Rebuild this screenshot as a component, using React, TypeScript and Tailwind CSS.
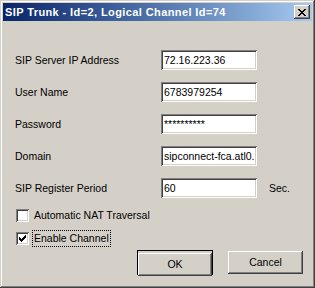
const raised =
  'shadow-[inset_-1px_-1px_#404040,inset_1px_1px_#ffffff,inset_-2px_-2px_#808080,inset_2px_2px_#d4d0c8]';
const sunken =
  'shadow-[inset_1px_1px_#808080,inset_-1px_-1px_#ffffff,inset_2px_2px_#404040,inset_-2px_-2px_#d4d0c8]';

function Field({ label, value, extra }: { label: string; value: string; extra?: string }) {
  return (
    <div className="flex items-center h-[20px]">
      <span className="w-[146px] text-[10.5px] leading-none">{label}</span>
      <div className={`w-[96px] h-[20px] bg-white ${sunken} flex items-center px-[3px] overflow-hidden`}>
        <span className="text-[10.5px] leading-none whitespace-nowrap">{value}</span>
      </div>
      {extra && <span className="ml-[12px] text-[10.5px] leading-none">{extra}</span>}
    </div>
  );
}

function Checkbox({ label, checked, focused }: { label: string; checked?: boolean; focused?: boolean }) {
  return (
    <div className="flex items-center h-[13px] ml-[1px]">
      <div className={`w-[13px] h-[13px] bg-white ${sunken} relative shrink-0`}>
        {checked && (
          <svg width="7" height="7" viewBox="0 0 7 7" className="absolute left-[3px] top-[3px]" shapeRendering="crispEdges">
            <path
              d="M6 0h1v3h-1zM5 1h1v3h-1zM4 2h1v3h-1zM3 3h1v3h-1zM2 4h1v3h-1zM1 3h1v3h-1zM0 2h1v3h-1z"
              fill="#000"
            />
          </svg>
        )}
      </div>
      <span
        className={`ml-[3px] px-[1px] py-[2px] text-[10.5px] leading-none border border-dotted ${
          focused ? 'border-black' : 'border-transparent'
        }`}
      >
        {label}
      </span>
    </div>
  );
}

export default function App() {
  return (
    <div
      className={`w-[315px] h-[288px] bg-[#d4d0c8] p-[3px] flex flex-col text-black font-['Liberation_Sans',Arial,sans-serif] shadow-[inset_-1px_-1px_#404040,inset_1px_1px_#d4d0c8,inset_-2px_-2px_#808080,inset_2px_2px_#ffffff]`}
    >
      {/* Title bar */}
      <div className="h-[18px] flex items-center justify-between pl-[2px] pr-[2px] bg-gradient-to-r from-[#0a246a] to-[#a6caf0]">
        <span className="text-white font-bold text-[11px] tracking-[0.4px] leading-none">
          SIP Trunk - Id=2, Logical Channel Id=74
        </span>
        <button className={`w-[16px] h-[14px] bg-[#d4d0c8] ${raised} flex items-center justify-center`}>
          <svg width="8" height="7" viewBox="0 0 8 7" shapeRendering="crispEdges">
            <path
              d="M0 0h2v1h-2zM6 0h2v1h-2zM1 1h2v1h-2zM5 1h2v1h-2zM2 2h4v1h-4zM3 3h2v1h-2zM2 4h4v1h-4zM1 5h2v1h-2zM5 5h2v1h-2zM0 6h2v1h-2zM6 6h2v1h-2z"
              fill="#000"
            />
          </svg>
        </button>
      </div>

      {/* Body */}
      <div className="flex flex-col pl-[12px] pt-[29px]">
        <div className="flex flex-col gap-[12px]">
          <Field label="SIP Server IP Address" value="72.16.223.36" />
          <Field label="User Name" value="6783979254" />
          <Field label="Password" value="**********" />
          <Field label="Domain" value="sipconnect-fca.atl0." />
          <Field label="SIP Register Period" value="60" extra="Sec." />
        </div>

        <div className="mt-[11px]">
          <Checkbox label="Automatic NAT Traversal" />
        </div>
        <div className="mt-[10px]">
          <Checkbox label="Enable Channel" checked focused />
        </div>

        <div className="flex items-start mt-[5px] ml-[122px]">
          <div className="w-[76px] h-[25px] border border-black">
            <button className={`w-full h-full ${raised} bg-[#d4d0c8] text-[10.5px] leading-none`}>OK</button>
          </div>
          <button
            className={`ml-[15px] mt-[1px] w-[75px] h-[23px] ${raised} bg-[#d4d0c8] text-[10.5px] leading-none`}
          >
            Cancel
          </button>
        </div>
      </div>
    </div>
  );
}
